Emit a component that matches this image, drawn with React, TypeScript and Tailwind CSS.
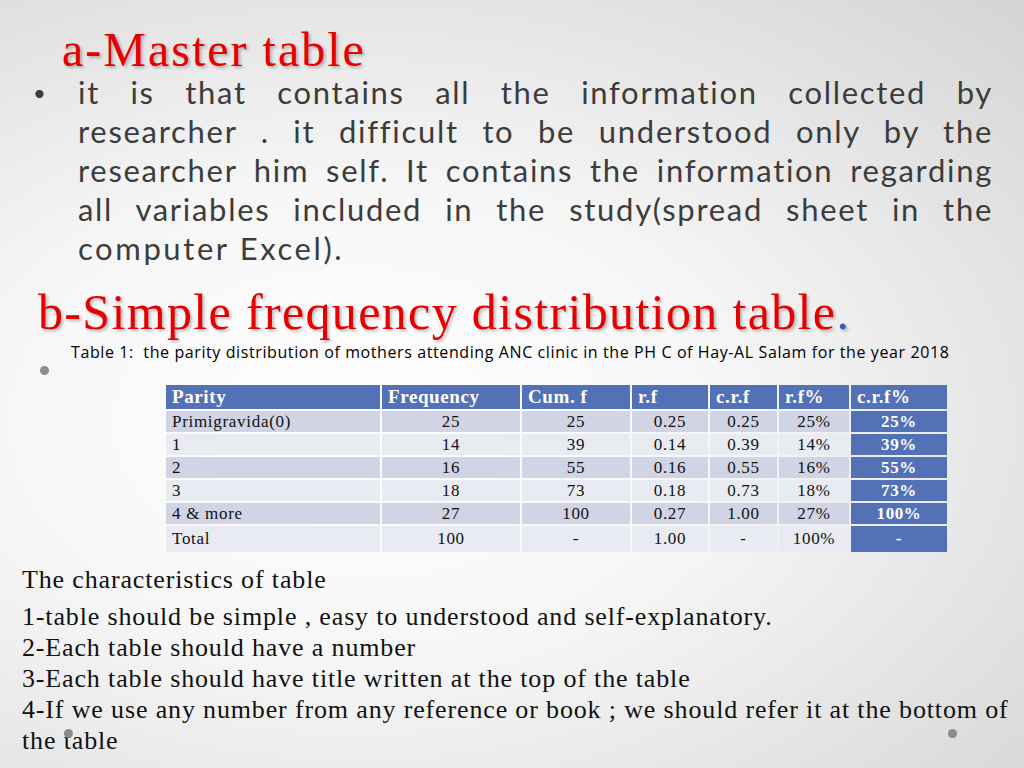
const rows = [
  ['Primigravida(0)', '25', '25', '0.25', '0.25', '25%', '25%'],
  ['1', '14', '39', '0.14', '0.39', '14%', '39%'],
  ['2', '16', '55', '0.16', '0.55', '16%', '55%'],
  ['3', '18', '73', '0.18', '0.73', '18%', '73%'],
  ['4 & more', '27', '100', '0.27', '1.00', '27%', '100%'],
  ['Total', '100', '-', '1.00', '-', '100%', '-'],
];

const headers = ['Parity', 'Frequency', 'Cum. f', 'r.f', 'c.r.f', 'r.f%', 'c.r.f%'];

const lines = [
  'it is that contains all the information collected by',
  'researcher . it difficult to be understood only by the',
  'researcher him self. It contains the information regarding',
  'all variables included in the study(spread sheet in the',
];

function Dot({ className }: { className: string }) {
  return <div className={'absolute h-[9px] w-[9px] rounded-full bg-[#8c8c8c] ' + className} />;
}

export default function App() {
  return (
    <div className="relative h-[768px] w-[1024px] overflow-hidden bg-[radial-gradient(ellipse_at_35%_55%,#ffffff_0%,#f6f6f6_40%,#d4d4d4_100%)]">
      <Dot className="left-[40px] top-[366px]" />
      <Dot className="left-[64px] top-[729px]" />
      <Dot className="left-[948px] top-[729px]" />

      <h1 className="ml-[62px] pt-[27px] text-[48px] leading-[46px] tracking-[2px] text-[#e60000] font-['Liberation_Serif',serif] [text-shadow:2px_2px_3px_rgba(0,0,0,0.25)]">
        a-Master table
      </h1>

      <div className="flex font-['Lato',sans-serif] text-[31px] leading-[39px] tracking-[1.7px] text-[#3c3c3c]">
        <span className="ml-[33px] w-[45px] text-[22px]">•</span>
        <div className="w-[915px]">
          {lines.map((l) => (
            <div key={l} className="whitespace-nowrap text-justify [text-align-last:justify]">
              {l}
            </div>
          ))}
          <div className="tracking-[2.6px]">computer Excel).</div>
        </div>
      </div>

      <h2 className="ml-[38px] mt-[18px] text-[50px] leading-[52px] tracking-[1.35px] text-[#e60000] font-['Liberation_Serif',serif] [text-shadow:2px_2px_3px_rgba(0,0,0,0.25)]">
        b-Simple frequency distribution table<span className="text-[#3a5fb0]">.</span>
      </h2>

      <p className="ml-[71px] mt-[4px] font-['Open_Sans',sans-serif] text-[16px] leading-[20px] tracking-[0.6px] text-black whitespace-pre">
        Table 1:  the parity distribution of mothers attending ANC clinic in the PH C of Hay-AL Salam for the year 2018
      </p>

      <div className="ml-[166px] mt-[23px] grid w-[781px] grid-cols-[214px_138px_108px_76px_67px_70px_96px] gap-[2px] font-['Liberation_Serif',serif]">
        {headers.map((h) => (
          <div key={h} className="flex h-[24px] items-center bg-[#5371b7] px-[6px] text-[19px] tracking-[0.6px] font-bold text-white">
            {h}
          </div>
        ))}
        {rows.map((r, i) =>
          r.map((c, j) => {
            const shade = i % 2 === 0 ? 'bg-[#d0d4e4]' : 'bg-[#e9ebf3]';
            const h = i === rows.length - 1 ? 'h-[26px]' : 'h-[21px]';
            if (j === 6) {
              return (
                <div key={i + '-' + j} className={'flex items-center justify-center bg-[#5371b7] text-[17px] tracking-[0.6px] font-bold text-white ' + h}>
                  {c}
                </div>
              );
            }
            return (
              <div
                key={i + '-' + j}
                className={
                  'flex items-center text-[17px] tracking-[0.7px] text-[#111] ' +
                  shade +
                  ' ' +
                  h +
                  (j === 0 ? ' px-[6px]' : ' justify-center')
                }
              >
                {c}
              </div>
            );
          })
        )}
      </div>

      <div className="ml-[22px] mt-[12px] font-['Liberation_Serif',serif] text-[26px] leading-[31px] tracking-[0.85px] text-[#111]">
        <p>The characteristics of table</p>
        <div className="mt-[6px]">
          <p>1-table should be simple , easy to understood and self-explanatory.</p>
          <p>2-Each table should have a number</p>
          <p>3-Each table should have title written at the top of the table</p>
          <p className="whitespace-nowrap">
            4-If we use any number from any reference or book ; we should refer it at the bottom of
            <br />
            the table
          </p>
        </div>
      </div>
    </div>
  );
}
